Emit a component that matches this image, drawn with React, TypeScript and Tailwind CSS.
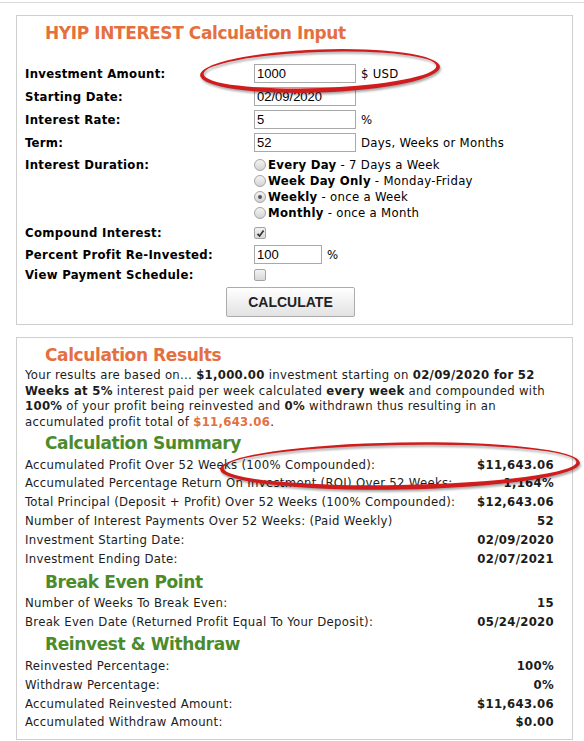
import React from 'react'

const base = "font-['DejaVu_Sans',Verdana,sans-serif] font-stretch-condensed tracking-[0.3px]"

function Field({ value, className }: { value: string; className: string }) {
  return (
    <div
      className={`h-[19px] border border-[#a9a9a9] bg-white pl-[2px] font-['Liberation_Sans',Arial,sans-serif] text-[13px] leading-[17px] tracking-normal text-black ${className}`}
    >
      {value}
    </div>
  )
}

function Radio({ checked }: { checked?: boolean }) {
  return (
    <span className="mr-[2px] inline-flex h-[12px] w-[12px] shrink-0 items-center justify-center rounded-full border border-[#a4a4a4] bg-gradient-to-b from-[#f4f4f4] to-[#d4d4d4]">
      {checked && <span className="h-[4px] w-[4px] rounded-full bg-[#555]" />}
    </span>
  )
}

function Checkbox({ checked }: { checked?: boolean }) {
  return (
    <span className="inline-flex h-[12px] w-[12px] items-center justify-center rounded-[2px] border border-[#a4a4a4] bg-gradient-to-b from-[#f2f2f2] to-[#d8d8d8]">
      {checked && (
        <svg width="9" height="9" viewBox="0 0 9 9">
          <path d="M1.5 4.8 L3.6 7 L7.6 1.6" fill="none" stroke="#333" strokeWidth="1.7" />
        </svg>
      )}
    </span>
  )
}

function InputRow({ label, children, className }: { label: string; children: React.ReactNode; className: string }) {
  return (
    <div className={`flex items-center ${className}`}>
      <div className="w-[229px] text-[13px] font-bold text-black">{label}</div>
      {children}
    </div>
  )
}

function ResultRow({ label, value }: { label: string; value: string }) {
  return (
    <div className="flex h-[18.8px] items-center justify-between text-[13px] text-[#1c1c1c]">
      <span>{label}</span>
      <span className="font-bold">{value}</span>
    </div>
  )
}

export default function App() {
  return (
    <div className={`relative h-[741px] w-[584px] overflow-hidden bg-white pt-[2px] ${base}`}>
      <div className="border-t border-[#dcdcdc]" />

      {/* Input panel */}
      <div className="ml-[16px] mt-[12px] w-[557px] border border-[#cfcfcf] px-[8px] pb-[7px]">
        <h2 className="mb-[17px] pl-[20px] pt-[5px] text-[17px] font-bold leading-[24px] font-stretch-normal tracking-[-0.4px] text-[#e4703f]">
          HYIP INTEREST Calculation Input
        </h2>

        <InputRow label="Investment Amount:" className="h-[23px]">
          <Field value="1000" className="w-[102px]" />
          <span className="ml-[5px] text-[13px]">$ USD</span>
        </InputRow>
        <InputRow label="Starting Date:" className="h-[23px]">
          <Field value="02/09/2020" className="w-[102px]" />
        </InputRow>
        <InputRow label="Interest Rate:" className="h-[23px]">
          <Field value="5" className="w-[102px]" />
          <span className="ml-[5px] text-[13px]">%</span>
        </InputRow>
        <InputRow label="Term:" className="h-[23px]">
          <Field value="52" className="w-[102px]" />
          <span className="ml-[5px] text-[13px]">Days, Weeks or Months</span>
        </InputRow>

        <div className="mt-[3px] flex">
          <div className="w-[229px] text-[13px] font-bold leading-[16px] text-black">Interest Duration:</div>
          <div className="text-[13px] leading-[16px] text-black">
            <div className="flex h-[16px] items-center">
              <Radio />
              <b>Every Day</b>&nbsp;- 7 Days a Week
            </div>
            <div className="flex h-[16px] items-center">
              <Radio />
              <b>Week Day Only</b>&nbsp;- Monday-Friday
            </div>
            <div className="flex h-[16px] items-center">
              <Radio checked />
              <b>Weekly</b>&nbsp;- once a Week
            </div>
            <div className="flex h-[16px] items-center">
              <Radio />
              <b>Monthly</b>&nbsp;- once a Month
            </div>
          </div>
        </div>

        <InputRow label="Compound Interest:" className="mt-[1px] h-[22px]">
          <Checkbox checked />
        </InputRow>
        <InputRow label="Percent Profit Re-Invested:" className="h-[21px]">
          <Field value="100" className="w-[68px]" />
          <span className="ml-[5px] text-[13px]">%</span>
        </InputRow>
        <InputRow label="View Payment Schedule:" className="h-[19px]">
          <Checkbox />
        </InputRow>

        <button
          type="button"
          className="ml-[201px] mt-[3px] h-[30px] w-[129px] rounded-[2px] border border-[#acacac] bg-gradient-to-b from-[#ffffff] to-[#e2e2e2] font-['Liberation_Sans',Arial,sans-serif] text-[14px] font-bold tracking-normal text-[#222]"
        >
          CALCULATE
        </button>
      </div>

      {/* Results panel */}
      <div className="ml-[16px] mt-[12px] w-[557px] border border-[#cfcfcf] pb-[7px] pl-[8px] pr-[18px]">
        <h2 className="pl-[20px] pt-[5px] text-[17px] font-bold leading-[24px] font-stretch-normal tracking-[-0.4px] text-[#e4703f]">
          Calculation Results
        </h2>
        <p className="text-[13px] leading-[15.5px] text-[#1c1c1c]">
          Your results are based on... <b>$1,000.00</b> investment starting on <b>02/09/2020 for 52</b>
          <br />
          <b>Weeks at 5%</b> interest paid per week calculated <b>every week</b> and compounded with
          <br />
          <b>100%</b> of your profit being reinvested and <b>0%</b> withdrawn thus resulting in an
          <br />
          accumulated profit total of <b className="text-[#e4703f]">$11,643.06</b>.
        </p>

        <h3 className="pl-[20px] pt-[2px] text-[17px] font-bold leading-[24px] font-stretch-normal tracking-[-0.4px] text-[#4b8b2b]">
          Calculation Summary
        </h3>
        <ResultRow label="Accumulated Profit Over 52 Weeks (100% Compounded):" value="$11,643.06" />
        <ResultRow label="Accumulated Percentage Return On Investment (ROI) Over 52 Weeks:" value="1,164%" />
        <ResultRow label="Total Principal (Deposit + Profit) Over 52 Weeks (100% Compounded):" value="$12,643.06" />
        <ResultRow label="Number of Interest Payments Over 52 Weeks: (Paid Weekly)" value="52" />
        <ResultRow label="Investment Starting Date:" value="02/09/2020" />
        <ResultRow label="Investment Ending Date:" value="02/07/2021" />

        <h3 className="pl-[20px] pt-[2px] text-[17px] font-bold leading-[24px] font-stretch-normal tracking-[-0.4px] text-[#4b8b2b]">
          Break Even Point
        </h3>
        <ResultRow label="Number of Weeks To Break Even:" value="15" />
        <ResultRow label="Break Even Date (Returned Profit Equal To Your Deposit):" value="05/24/2020" />

        <h3 className="pl-[20px] pt-[1px] text-[17px] font-bold leading-[24px] font-stretch-normal tracking-[-0.4px] text-[#4b8b2b]">
          Reinvest &amp; Withdraw
        </h3>
        <ResultRow label="Reinvested Percentage:" value="100%" />
        <ResultRow label="Withdraw Percentage:" value="0%" />
        <ResultRow label="Accumulated Reinvested Amount:" value="$11,643.06" />
        <ResultRow label="Accumulated Withdraw Amount:" value="$0.00" />
      </div>

      {/* red hand-drawn highlight marks */}
      <svg
        className="pointer-events-none absolute left-0 top-0 drop-shadow-[1px_2px_1px_rgba(0,0,0,0.35)]"
        width="584"
        height="741"
      >
        <g transform="rotate(-2 320 71)">
          <path
            fillRule="evenodd"
            fill="#d01c1c"
            d="M200 71 a120 21.5 0 1 0 240 0 a120 21.5 0 1 0 -240 0 Z M203.5 70 a116.5 18 0 1 0 233 0 a116.5 18 0 1 0 -233 0 Z"
          />
        </g>
        <g transform="rotate(-1 400 466)">
          <path
            fillRule="evenodd"
            fill="#d01c1c"
            d="M220 466 a180 23.5 0 1 0 360 0 a180 23.5 0 1 0 -360 0 Z M223.5 465 a176.5 20 0 1 0 353 0 a176.5 20 0 1 0 -353 0 Z"
          />
        </g>
      </svg>
    </div>
  )
}
